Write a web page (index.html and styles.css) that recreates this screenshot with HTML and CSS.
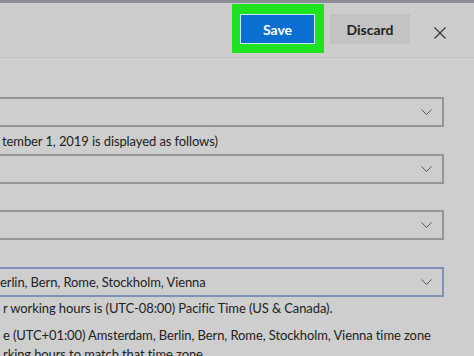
FILE: index.html
```html
<!DOCTYPE html>
<html lang="en">
<head>
    <meta charset="UTF-8">
    <meta name="viewport" content="width=device-width, initial-scale=1.0">
    <title>Time zone settings</title>
    <link rel="stylesheet" href="styles.css">
</head>
<body>
    <div class="top-bar"></div>

    <div class="header">
        <div class="highlight">
            <button class="btn btn-save">Save</button>
        </div>
        <button class="btn btn-discard">Discard</button>
        <button class="close-btn" aria-label="Close">
            <svg width="12" height="12" viewBox="0 0 12 12">
                <path d="M0.5 0.5 L11.5 11.5 M11.5 0.5 L0.5 11.5" stroke="#333" stroke-width="1.1" fill="none"/>
            </svg>
        </button>
    </div>

    <div class="content">
        <div class="select first">
            <span class="select-value"></span>
            <svg class="chevron" width="11" height="6" viewBox="0 0 11 6"><path d="M0.5 0.5 L5.5 5.5 L10.5 0.5" stroke="#555" fill="none"/></svg>
        </div>

        <p class="label">tember 1, 2019 is displayed as follows)</p>

        <div class="select">
            <span class="select-value"></span>
            <svg class="chevron" width="11" height="6" viewBox="0 0 11 6"><path d="M0.5 0.5 L5.5 5.5 L10.5 0.5" stroke="#555" fill="none"/></svg>
        </div>

        <div class="select spaced">
            <span class="select-value"></span>
            <svg class="chevron" width="11" height="6" viewBox="0 0 11 6"><path d="M0.5 0.5 L5.5 5.5 L10.5 0.5" stroke="#555" fill="none"/></svg>
        </div>

        <div class="select spaced focused">
            <span class="select-value">erlin, Bern, Rome, Stockholm, Vienna</span>
            <svg class="chevron" width="11" height="6" viewBox="0 0 11 6"><path d="M0.5 0.5 L5.5 5.5 L10.5 0.5" stroke="#555" fill="none"/></svg>
        </div>

        <p class="note">r working hours is (UTC-08:00) Pacific Time (US &amp; Canada).</p>
        <p class="note note-gap">e (UTC+01:00) Amsterdam, Berlin, Bern, Rome, Stockholm, Vienna time zone<br>rking hours to match that time zone.</p>
    </div>
</body>
</html>
```

FILE: styles.css
```css
* {
    margin: 0;
    padding: 0;
    box-sizing: border-box;
}

body {
    font-family: Lato, "Noto Sans", sans-serif;
    background: #cecece;
    color: #222;
    width: 474px;
    height: 356px;
    overflow: hidden;
}

.top-bar {
    height: 3px;
    background: #8b8e96;
}

.header {
    display: flex;
    align-items: flex-start;
    justify-content: flex-end;
    height: 55px;
    border-bottom: 1px solid #c3c3c3;
    padding-right: 28px;
    background: #cdcdcd;
}

.highlight {
    margin-top: 1px;
    width: 92px;
    height: 49px;
    background: #1fe31f;
    padding: 10px 9px 9px 8px;
}

.btn {
    font-family: inherit;
    font-size: 14px;
    border: none;
    cursor: pointer;
}

.btn-save {
    width: 75px;
    height: 30px;
    background: #0b6fd2;
    color: #fff;
    font-weight: 700;
    border: 1px solid #cfe6ff;
}

.btn-discard {
    margin-top: 11px;
    margin-left: 6px;
    width: 80px;
    height: 30px;
    background: #c3c3c3;
    color: #222;
    font-weight: 700;
}

.close-btn {
    margin-top: 24px;
    margin-left: 24px;
    width: 12px;
    height: 12px;
    background: none;
    border: none;
    display: flex;
}

.content {
    padding-right: 30px;
    font-size: 13px;
    letter-spacing: -0.1px;
}

.select {
    height: 30px;
    border: 2px solid #959595;
    border-left: none;
    display: flex;
    align-items: center;
    justify-content: space-between;
    padding-right: 10px;
}

.select.first {
    margin-top: 39px;
}

.select.spaced {
    margin-top: 26px;
}

.select.focused {
    border-color: #8090b8;
    margin-top: 27px;
}

.chevron {
    display: block;
}

.label {
    height: 27px;
    line-height: 29px;
    padding-left: 2px;
}

.note {
    margin-top: 1px;
    line-height: 21px;
    padding-left: 3px;
}

.note-gap {
    margin-top: 7px;
    line-height: 19px;
    white-space: nowrap;
}
```
